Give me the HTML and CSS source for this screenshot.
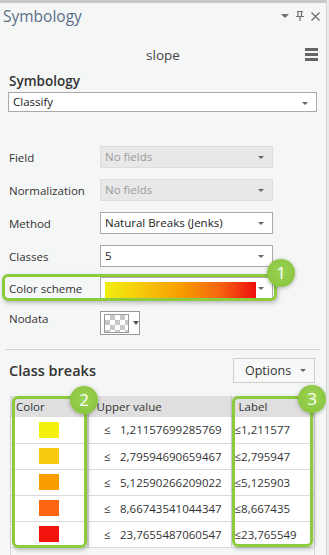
FILE: index.html
```html
<!DOCTYPE html>
<html lang="en">

<head>
  <meta charset="UTF-8">
  <meta name="viewport" content="width=device-width, initial-scale=1.0">
  <title>Symbology</title>
  <link rel="stylesheet" href="styles.css">
</head>

<body>
  <div class="pane">
    <div class="topbar"></div>

    <div class="pane-header">
      <span class="pane-title">Symbology</span>
      <div class="pane-tools">
        <svg width="8" height="5" viewBox="0 0 8 5"><path d="M0 0h8L4 4z" fill="#6d6d6d"/></svg>
        <svg width="8" height="10" viewBox="0 0 8 10"><path d="M1 .5h6M2 .5v5M5.5 .5v5M0 5.5h8M4 5.5V10" stroke="#6d6d6d" stroke-width="1.2" fill="none"/></svg>
        <svg width="9" height="9" viewBox="0 0 9 9"><path d="M.5 .5l8 8M8.5 .5l-8 8" stroke="#6d6d6d" stroke-width="1.3"/></svg>
      </div>
    </div>

    <div class="layer-row">
      <span class="layer-name">slope</span>
      <span class="menu-btn"><i></i><i></i><i></i></span>
    </div>

    <div class="section">
      <div class="section-title">Symbology</div>
      <div class="select wide">Classify</div>
    </div>

    <div class="form">
      <div class="form-row">
        <label>Field</label>
        <div class="select disabled">No fields</div>
      </div>
      <div class="form-row">
        <label>Normalization</label>
        <div class="select disabled">No fields</div>
      </div>
      <div class="form-row">
        <label>Method</label>
        <div class="select">Natural Breaks (Jenks)</div>
      </div>
      <div class="form-row">
        <label>Classes</label>
        <div class="select">5</div>
      </div>
      <div class="form-row highlighted">
        <label>Color scheme</label>
        <div class="select ramp"><span class="ramp-bar"></span></div>
        <span class="callout box-1"></span>
        <span class="badge badge-1">1</span>
      </div>
      <div class="form-row nodata">
        <label>Nodata</label>
        <div class="swatch-btn"><span class="checker"></span><span class="arrow"></span></div>
      </div>
    </div>

    <hr class="divider">

    <div class="breaks-header">
      <span class="breaks-title">Class breaks</span>
      <div class="options-btn">Options</div>
    </div>

    <div class="table-wrap">
      <table class="breaks">
        <thead>
          <tr>
            <th class="col-color">Color</th>
            <th class="col-value">Upper value</th>
            <th class="col-label">Label</th>
          </tr>
        </thead>
        <tbody id="breaks-body"></tbody>
      </table>
      <span class="callout box-2"></span>
      <span class="badge badge-2">2</span>
      <span class="callout box-3"></span>
      <span class="badge badge-3">3</span>
    </div>
  </div>

  <script>
    // class breaks
    const breaks = [
      { color: '#f4f10f', value: '1,21157699285769', label: '1,211577' },
      { color: '#f8c80f', value: '2,79594690659467', label: '2,795947' },
      { color: '#fa9d00', value: '5,12590266209022', label: '5,125903' },
      { color: '#fb6512', value: '8,66743541044347', label: '8,667435' },
      { color: '#f3130d', value: '23,7655487060547', label: '23,765549' }
    ];

    const body = document.getElementById('breaks-body');
    breaks.forEach(b => {
      const row = document.createElement('tr');
      row.innerHTML = `
        <td class="col-color"><span class="swatch" style="background:${b.color}"></span></td>
        <td class="col-value"><span class="le">≤</span>${b.value}</td>
        <td class="col-label">≤${b.label}</td>
      `;
      body.appendChild(row);
    });
  </script>
</body>

</html>
```

FILE: styles.css
```css
body {
  margin: 0;
  padding: 0;
  background-color: #e9e9e9;
  font-family: "Open Sans", "Noto Sans", sans-serif;
  color: #333;
}

.pane {
  width: 326px;
  height: 555px;
  background-color: #f5f6f6;
  border-right: 1px solid #d4d4d4;
  overflow: hidden;
}

.topbar {
  height: 3px;
  background-color: #c7c7c7;
}

.pane-header {
  display: flex;
  align-items: center;
  justify-content: space-between;
  height: 26px;
  padding: 0 6px 0 3px;
}

.pane-title {
  font-size: 15.5px;
  color: #5a6f88;
}

.pane-tools {
  display: flex;
  align-items: center;
  gap: 7px;
}

.layer-row {
  position: relative;
  display: flex;
  justify-content: center;
  align-items: center;
  height: 28px;
  margin-top: 12px;
}

.layer-name {
  font-size: 13.5px;
  color: #444;
}

.menu-btn {
  position: absolute;
  right: 8px;
  top: 7px;
  display: flex;
  flex-direction: column;
  gap: 2px;
}

.menu-btn i {
  display: block;
  width: 13px;
  height: 3px;
  background-color: #666;
}

.section {
  padding: 2px 9px 0 8px;
}

.section-title {
  font-size: 13.5px;
  font-weight: 600;
  color: #333;
  height: 20px;
  line-height: 20px;
  padding-left: 1px;
}

.select {
  position: relative;
  box-sizing: border-box;
  height: 22px;
  line-height: 20px;
  padding-left: 4px;
  font-size: 11.5px;
  color: #222;
  background-color: #fff;
  border: 1px solid #a9a9a9;
}

.select::after {
  content: "";
  position: absolute;
  right: 8px;
  top: 9px;
  border-left: 3px solid transparent;
  border-right: 3px solid transparent;
  border-top: 3px solid #666;
}

.select.wide {
  height: 20px;
  line-height: 18px;
  margin-top: 1px;
}

.select.disabled {
  background-color: #e8e8e8;
  border-color: #dcdcdc;
  color: #9a9a9a;
}

.form {
  padding: 34px 0 0 9px;
  display: flex;
  flex-direction: column;
  gap: 11px;
}

.form-row {
  position: relative;
  display: flex;
  align-items: center;
}

.form-row label {
  width: 91px;
  font-size: 11.5px;
  color: #333;
}

.form-row .select {
  width: 173px;
}

.form-row.highlighted {
  margin-top: -1px;
}

.select.ramp {
  padding: 4px 0 0 4px;
}

.ramp-bar {
  display: block;
  width: 151px;
  height: 16px;
  background: linear-gradient(to right, #f2ee10 0%, #f6c20a 28%, #f79a00 52%, #f6650f 76%, #ef0e0e 100%);
}

.form-row.nodata {
  align-items: flex-start;
  margin-top: 1px;
}

.swatch-btn {
  box-sizing: border-box;
  display: flex;
  align-items: center;
  width: 40px;
  height: 24px;
  padding: 0 0 0 3px;
  border: 1px solid #999;
  background-color: #fff;
}

.checker {
  width: 23px;
  height: 17px;
  border: 1px solid #999;
  background-color: #fff;
  background-image:
    linear-gradient(45deg, #c8c8c8 25%, transparent 25%, transparent 75%, #c8c8c8 75%),
    linear-gradient(45deg, #c8c8c8 25%, transparent 25%, transparent 75%, #c8c8c8 75%);
  background-size: 10px 10px;
  background-position: 0 0, 5px 5px;
}

.swatch-btn .arrow {
  margin-left: 4px;
  border-left: 3.5px solid transparent;
  border-right: 3.5px solid transparent;
  border-top: 4px solid #555;
}

.divider {
  border: none;
  border-top: 1px solid #d2d2d2;
  margin: 14px 6px 0 5px;
}

.breaks-header {
  display: flex;
  justify-content: space-between;
  align-items: center;
  padding: 8px 11px 0 9px;
}

.breaks-title {
  font-size: 14.5px;
  font-weight: 600;
  color: #333;
}

.options-btn {
  position: relative;
  box-sizing: border-box;
  width: 82px;
  height: 25px;
  line-height: 23px;
  padding-left: 11px;
  font-size: 12.5px;
  color: #333;
  background-color: #f8f8f8;
  border: 1px solid #cfcfcf;
}

.options-btn::after {
  content: "";
  position: absolute;
  right: 8px;
  top: 10px;
  border-left: 3px solid transparent;
  border-right: 3px solid transparent;
  border-top: 3px solid #666;
}

.table-wrap {
  position: relative;
  margin: 13px 11px 0 10px;
  height: 160px;
  border-left: 1px solid #d6d6d6;
  border-right: 1px solid #d6d6d6;
}

.breaks {
  width: 100%;
  table-layout: fixed;
  border-collapse: collapse;
  font-size: 11.5px;
  color: #333;
}

.breaks th,
.breaks td {
  box-sizing: border-box;
  white-space: nowrap;
  overflow: hidden;
}

.breaks th {
  height: 21px;
  padding: 0 0 0 5px;
  text-align: left;
  font-weight: normal;
  background-color: #dfdfdf;
  border-right: 1px solid #c8c8c8;
}

.breaks td {
  height: 26px;
  padding: 0;
  background-color: #fff;
  border-bottom: 1px solid #dadada;
  border-right: 1px solid #dadada;
}

.breaks tr td:last-child,
.breaks tr th:last-child {
  border-right: none;
}

.breaks .col-color {
  width: 77px;
}

.breaks td.col-color {
  border-right: 2px solid #dadada;
}

.breaks .col-value {
  width: 143px;
}

.breaks th.col-value {
  padding-left: 8px;
}

.breaks th.col-label {
  padding-left: 7px;
}

.breaks td.col-value {
  padding-left: 15px;
}

.breaks td.col-label {
  padding-left: 3px;
}

.le {
  display: inline-block;
  width: 16px;
}

.swatch {
  display: block;
  width: 20px;
  height: 16px;
  margin: 0 auto;
}

.callout {
  position: absolute;
  border: 3px solid #8dcb3e;
  border-radius: 6px;
  box-shadow: 1px 2px 4px rgba(0, 0, 0, 0.25);
  pointer-events: none;
}

.box-1 {
  left: -7px;
  top: -3px;
  width: 269px;
  height: 21px;
}

.box-2 {
  left: 1px;
  top: 0;
  width: 69px;
  height: 146px;
}

.box-3 {
  left: 221px;
  top: 0;
  width: 75px;
  height: 145px;
}

.badge {
  position: absolute;
  width: 28px;
  height: 28px;
  line-height: 28px;
  border-radius: 50%;
  background: radial-gradient(circle at 50% 45%, #9cd356 0%, #8cc63f 70%, #86bf3a 100%);
  box-shadow: 0 1px 4px rgba(0, 0, 0, 0.3);
  color: #fff;
  font-size: 17px;
  text-align: center;
}

.badge-1 {
  left: 258px;
  top: -18px;
}

.badge-2 {
  left: 59px;
  top: -10px;
}

.badge-3 {
  left: 287px;
  top: -11px;
}
```
